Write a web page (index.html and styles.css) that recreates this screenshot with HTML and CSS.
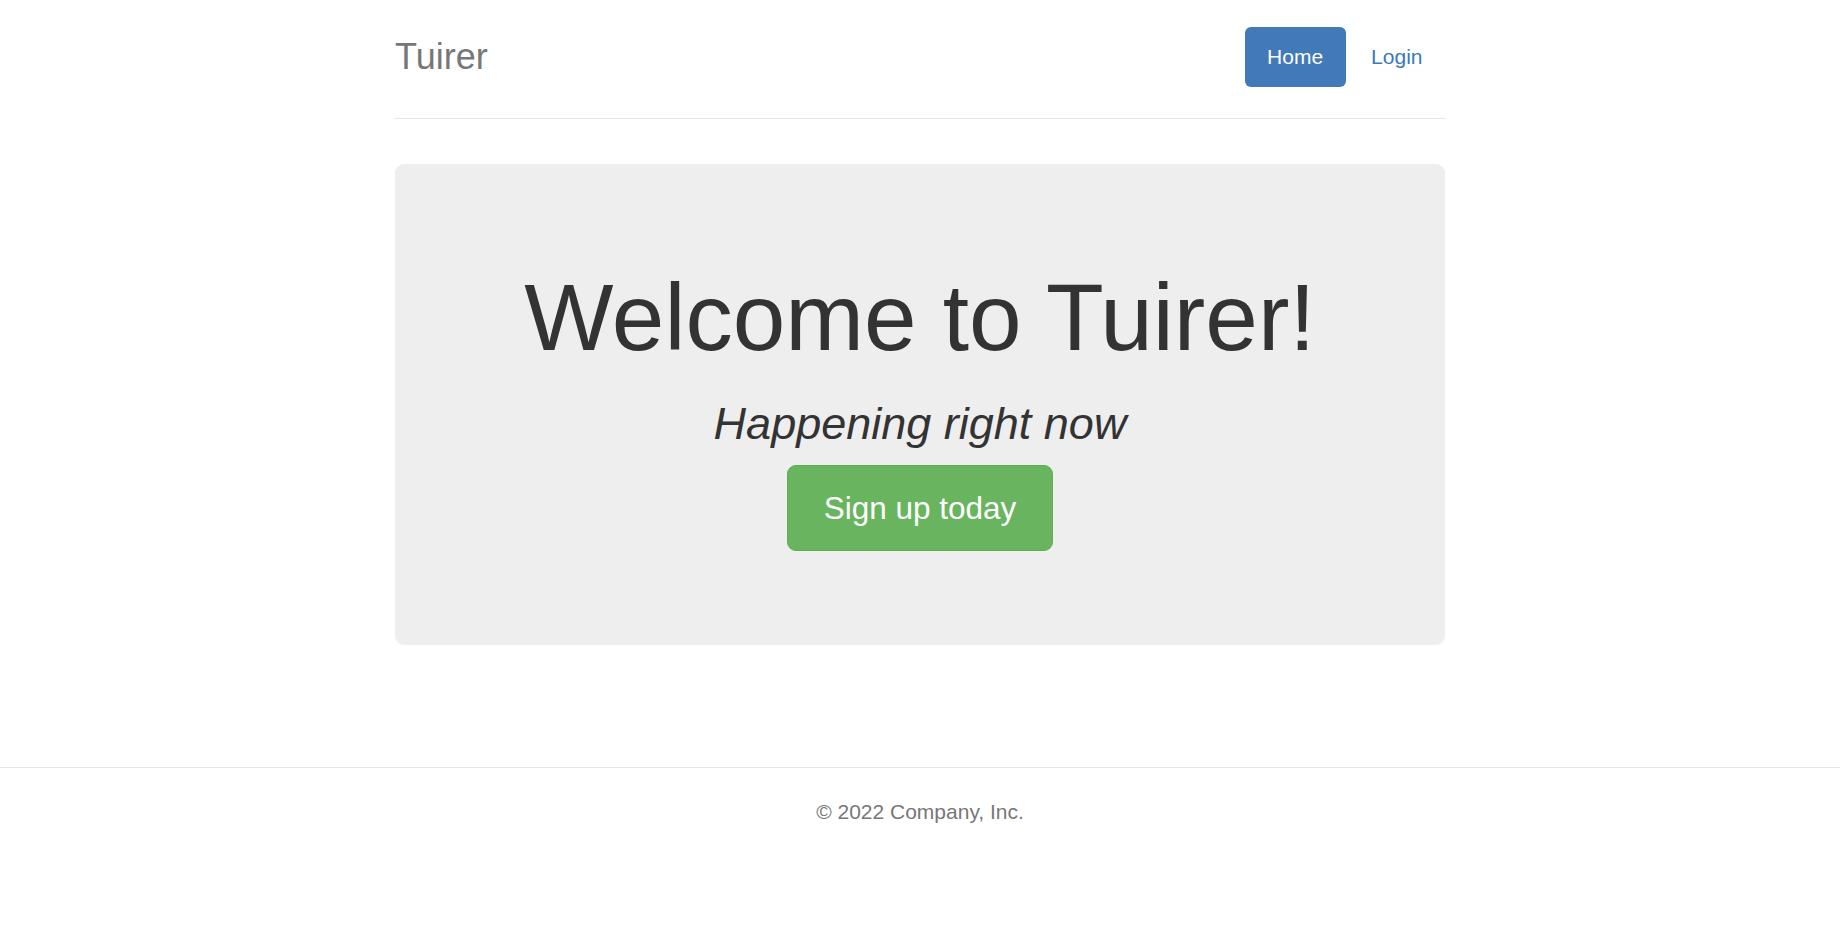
FILE: index.html
```html
<!DOCTYPE html>
<html lang="en">
<head>
<meta charset="utf-8">
<title>Tuirer</title>
<link rel="stylesheet" href="styles.css">
</head>
<body>
  <div class="container">
    <header class="header">
      <h3 class="brand">Tuirer</h3>
      <nav class="nav">
        <a class="pill active" href="#">Home</a>
        <a class="pill" href="#">Login</a>
      </nav>
    </header>
    <section class="jumbotron">
      <h1 class="title">Welcome to Tuirer!</h1>
      <h2 class="subtitle">Happening right now</h2>
      <p class="cta"><a class="btn-signup" href="#">Sign up today</a></p>
    </section>
  </div>
  <footer class="footer">
    <p class="copy">© 2022 Company, Inc.</p>
  </footer>
</body>
</html>
```

FILE: styles.css
```css
html, body {
  margin: 0;
  padding: 0;
  background: #fff;
}
body {
  font-family: "Liberation Sans", Arial, Helvetica, sans-serif;
  font-size: 21px;
  line-height: 1.42857;
  color: #333;
}
.container {
  width: 1050px;
  margin: 0 auto;
  padding-top: 27px;
}
.header {
  display: flex;
  justify-content: space-between;
  align-items: flex-start;
  padding-bottom: 31px;
  border-bottom: 1px solid #e5e5e5;
  margin-bottom: 45px;
}
.brand {
  margin: 0;
  font-size: 36px;
  font-weight: normal;
  line-height: 60px;
  color: #777;
}
.nav {
  display: flex;
  gap: 3px;
}
.pill {
  display: block;
  padding: 15px 22.5px;
  line-height: 30px;
  font-size: 21px;
  border-radius: 6px;
  color: #3a79ba;
  text-decoration: none;
}
.pill.active {
  background: #4279b8;
  color: #fff;
}
.jumbotron {
  background: #eee;
  border-radius: 9px;
  padding: 72px 0;
  text-align: center;
  margin-bottom: 122px;
}
.title {
  margin: 30px 0 15px;
  font-size: 94.5px;
  font-weight: normal;
  line-height: 1.1;
  color: #333;
}
.subtitle {
  margin: 29px 0 17px;
  font-size: 45px;
  font-weight: normal;
  font-style: italic;
  line-height: 1.1;
  color: #333;
}
.cta {
  margin: 0 0 21.5px;
}
.btn-signup {
  display: inline-block;
  padding: 21px 36px;
  font-size: 31.5px;
  line-height: 42px;
  color: #fff;
  background: #69b45f;
  border: 1.5px solid #5aae50;
  border-radius: 9px;
  text-decoration: none;
}
.footer {
  border-top: 1px solid #e5e5e5;
  padding-top: 29.5px;
  text-align: center;
  color: #777;
}
.copy {
  margin: 0 0 15px;
}
```
